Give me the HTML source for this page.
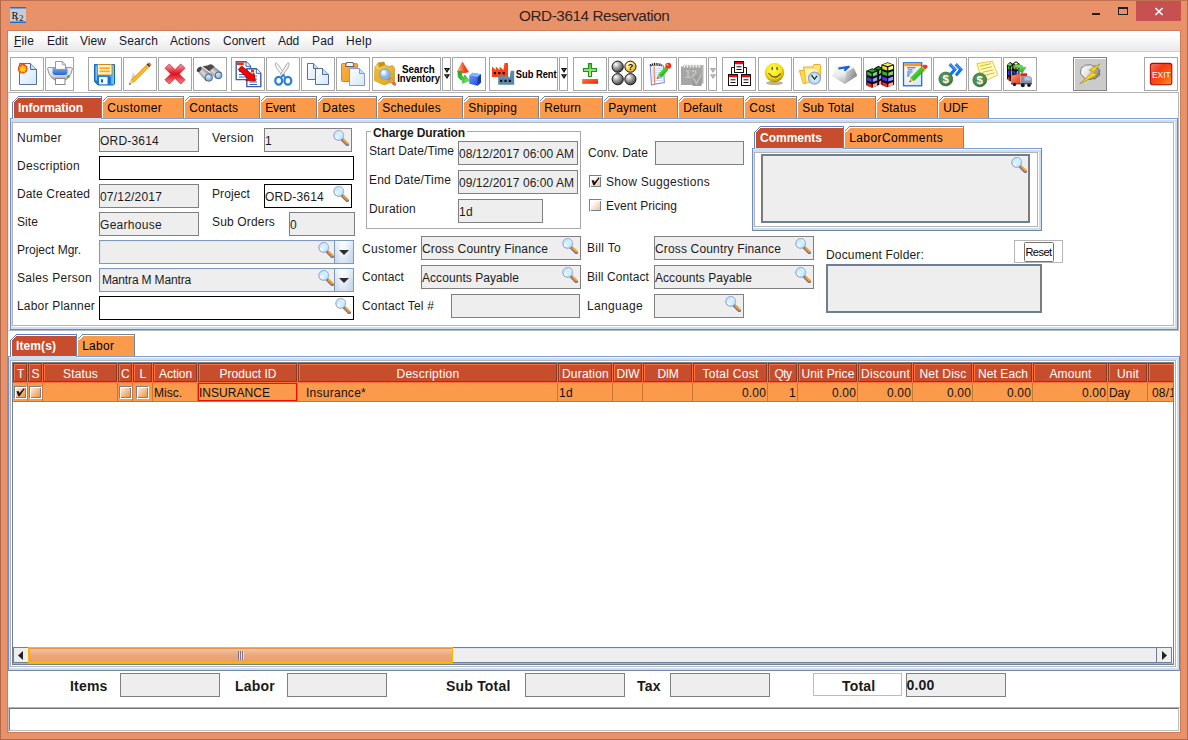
<!DOCTYPE html><html><head><meta charset="utf-8"><title>ORD-3614 Reservation</title><style>
*{box-sizing:border-box;margin:0;padding:0}
html,body{width:1188px;height:740px;overflow:hidden;background:#E9926A;font-family:"Liberation Sans",sans-serif;font-size:12px;color:#000}
.a{position:absolute}
.t{position:absolute;white-space:nowrap;line-height:14px;height:14px;font-size:12px;color:#1c1c1c}
.b{font-weight:bold}
.f{position:absolute;background:#EEEEEE;border:1px solid #808080;height:24px}
.f span{position:absolute;left:0px;top:5px;line-height:14px;white-space:nowrap;color:#1c1c1c}
.fw{background:#fff;border:1px solid #000}
.fb{border-color:#8aa4c8}
.tb{position:absolute;top:57px;width:34px;height:34px;border:1px solid #a5a5a5;background:#fff}
.tb svg{position:absolute;left:0;top:0}
.dd{position:absolute;top:57px;width:9px;height:34px;border:1px solid #a5a5a5;background:#fff}
.hc{position:absolute;top:0;height:19px;padding-left:1px;border:1px solid #8C3A22;background:#C74E2D;box-shadow:inset 1px 1px 0 #FF6E3C;color:#fff;text-align:center;line-height:20px;font-size:12px;white-space:nowrap;overflow:hidden}
.rc{position:absolute;top:20px;height:19px;border-right:1px solid #C8782E;border-bottom:1px solid #C8782E;background:#FB9A4B;line-height:20px;white-space:nowrap;overflow:hidden;color:#111}
.cb{position:absolute;width:13px;height:13px;border:1px solid;border-color:#6f8296 #fff #fff #6f8296;background:linear-gradient(135deg,#ffffff 22%,#f6bc8e 95%);box-shadow:inset 1px 1px 0 #fff,inset -1px -1px 0 #6f8296}
.cbt{background:linear-gradient(135deg,#fde4cf 15%,#f08c38 95%)}
.mg{position:absolute;width:16px;height:16px}
</style></head><body>
<svg width="0" height="0" style="position:absolute"><defs>
<radialGradient id="lens" cx="0.42" cy="0.55" r="0.65"><stop offset="0" stop-color="#e4f6ff"/><stop offset="0.6" stop-color="#c0e8ff"/><stop offset="1" stop-color="#9fd4fa"/></radialGradient>
<linearGradient id="hdl" x1="0" y1="1" x2="1" y2="0"><stop offset="0.3" stop-color="#e8862a"/><stop offset="0.7" stop-color="#ffae3c"/></linearGradient>
<g id="mag"><path d="M9.3 9.6 L14.3 14.6" stroke="#6f7390" stroke-width="3.4" stroke-linecap="round"/><path d="M10 9.3 L15 14.2" stroke="url(#hdl)" stroke-width="2.5" stroke-linecap="butt"/><circle cx="5.5" cy="5.6" r="5.1" fill="#5d6678" opacity="0.55"/><circle cx="5.8" cy="5.3" r="4.9" fill="url(#lens)" stroke="#a3abd2" stroke-width="0.9"/><path d="M2.6 6.6 A3.4 3.4 0 0 0 4.6 8.6" stroke="#fff" stroke-width="1.3" fill="none" stroke-linecap="round"/><path d="M6.5 1.9 A3.6 3.6 0 0 1 9.2 4.4" stroke="#fff" stroke-width="0.9" fill="none" stroke-linecap="round" opacity="0.9"/></g>
</defs></svg>
<div class="a" style="left:0;top:0;width:1188px;height:740px;border:1px solid #B1694A;border-top-color:#C0714E"></div>
<div class="a" style="left:7px;top:30px;width:1174px;height:703px;background:#CC7D58"></div>
<div class="a" style="left:8px;top:31px;width:1172px;height:701px;background:#fff"></div>
<div class="a" style="left:10px;top:7px;width:16px;height:16px;background:#c9ccd3;border-top:1px solid #1e70c8;border-bottom:1px solid #1e70c8;box-shadow:inset 0 1px 0 #6fa0d8,inset 0 -1px 0 #6fa0d8;overflow:hidden"><span style="position:absolute;left:1.5px;top:1px;font-family:'Liberation Serif',serif;font-size:10.5px;line-height:13px;color:#111;letter-spacing:0px">R<span style="font-size:9px;position:relative;top:1.5px;left:0.5px">2</span></span><div class="a" style="left:6px;top:10px;width:1px;height:3px;background:#222;transform:rotate(-35deg)"></div></div>
<div class="a" id="ttl" style="left:519px;top:6px;width:150px;text-align:left;font-size:15.3px;line-height:20px;color:#33231c;white-space:nowrap;letter-spacing:-0.43px">ORD-3614 Reservation</div>
<div class="a" style="left:1092px;top:13px;width:8px;height:2px;background:#1a1f28"></div>
<div class="a" style="left:1118px;top:7px;width:10px;height:8px;border:1px solid #1a1f28;border-top-width:2px"></div>
<div class="a" style="left:1136px;top:1px;width:45px;height:20px;background:#C75050"></div>
<svg class="a" style="left:1154px;top:7px" width="10" height="9" viewBox="0 0 10 9"><path d="M1.4 1 L8.6 8 M8.6 1 L1.4 8" stroke="#fff" stroke-width="1.7" fill="none"/></svg>
<div class="a" style="left:8px;top:31px;width:1172px;height:20px;background:linear-gradient(#ffffff 0%,#fbfbfb 35%,#e9e9e9 100%)"></div>
<div class="a" style="left:8px;top:51px;width:1172px;height:1px;background:#cfcfcf"></div>
<div class="t" style="left:14px;top:34px;color:#161630;letter-spacing:0.166px;">File</div>
<div class="t" style="left:47px;top:34px;color:#161630;letter-spacing:0.08px;">Edit</div>
<div class="t" style="left:80px;top:34px;color:#161630;letter-spacing:0.052px;">View</div>
<div class="t" style="left:119px;top:34px;color:#161630;letter-spacing:0.163px;">Search</div>
<div class="t" style="left:170px;top:34px;color:#161630;letter-spacing:0.093px;">Actions</div>
<div class="t" style="left:223px;top:34px;color:#161630;letter-spacing:-0.002px;">Convert</div>
<div class="t" style="left:278px;top:34px;color:#161630;letter-spacing:-0.117px;">Add</div>
<div class="t" style="left:312px;top:34px;color:#161630;letter-spacing:0.216px;">Pad</div>
<div class="t" style="left:346px;top:34px;color:#161630;letter-spacing:0.33px;">Help</div>
<div class="a" style="left:14px;top:46px;width:7px;height:1px;background:#161630"></div>
<svg width="0" height="0" style="position:absolute"><defs>
<linearGradient id="gDoc" x1="0" y1="0" x2="1" y2="1"><stop offset="0" stop-color="#ffffff"/><stop offset="1" stop-color="#d3e6f7"/></linearGradient>
<radialGradient id="gSun"><stop offset="0" stop-color="#ffd800"/><stop offset="0.45" stop-color="#ffc000"/><stop offset="0.6" stop-color="#f65a20"/><stop offset="0.85" stop-color="#f04828"/><stop offset="1" stop-color="#f04828" stop-opacity="0"/></radialGradient>
<linearGradient id="gPrn" x1="0" y1="0" x2="0" y2="1"><stop offset="0" stop-color="#f6f6f6"/><stop offset="0.5" stop-color="#e0e0e0"/><stop offset="0.8" stop-color="#a8a8a8"/><stop offset="1" stop-color="#6c6c6c"/></linearGradient>
<linearGradient id="gPrnB" x1="0" y1="0" x2="0" y2="1"><stop offset="0" stop-color="#7fb6ff"/><stop offset="1" stop-color="#1f63e0"/></linearGradient>
<linearGradient id="gFlop" x1="0" y1="0" x2="1" y2="0"><stop offset="0" stop-color="#1a7ad2"/><stop offset="0.7" stop-color="#1f86dc"/><stop offset="1" stop-color="#7fd8ff"/></linearGradient>
<linearGradient id="gX" x1="0" y1="0" x2="0" y2="1"><stop offset="0" stop-color="#f7a0a8"/><stop offset="0.5" stop-color="#e0101c"/><stop offset="1" stop-color="#f2868e"/></linearGradient>
<linearGradient id="gBin" x1="0" y1="0" x2="1" y2="1"><stop offset="0" stop-color="#5a5a5a"/><stop offset="0.5" stop-color="#d8d8d8"/><stop offset="1" stop-color="#6a6a6a"/></linearGradient>
<linearGradient id="gBar" x1="0" y1="1" x2="1" y2="0"><stop offset="0.12" stop-color="#3e3e3e"/><stop offset="0.48" stop-color="#dcdcdc"/><stop offset="0.9" stop-color="#3a3a3a"/></linearGradient>
<radialGradient id="gLens2" cx="0.4" cy="0.35"><stop offset="0" stop-color="#d8ecff"/><stop offset="1" stop-color="#7fb4f0"/></radialGradient>
<linearGradient id="gClip" x1="0" y1="0" x2="1" y2="1"><stop offset="0" stop-color="#f8b24c"/><stop offset="1" stop-color="#f09a20"/></linearGradient>
<linearGradient id="gBox" x1="0" y1="0" x2="1" y2="1"><stop offset="0" stop-color="#f8d868"/><stop offset="1" stop-color="#d89c10"/></linearGradient>
<linearGradient id="gCone" x1="0" y1="0" x2="1" y2="0"><stop offset="0" stop-color="#ffc8a0"/><stop offset="0.6" stop-color="#f44a20"/><stop offset="1" stop-color="#e83010"/></linearGradient>
<linearGradient id="gCube" x1="0" y1="0" x2="1" y2="1"><stop offset="0" stop-color="#6aa6ff"/><stop offset="1" stop-color="#1a3fd0"/></linearGradient>
<linearGradient id="gGrn" x1="0" y1="0" x2="0" y2="1"><stop offset="0" stop-color="#8ee07a"/><stop offset="1" stop-color="#1eaa1e"/></linearGradient>
<linearGradient id="gGrn2" x1="0" y1="0" x2="1" y2="1"><stop offset="0" stop-color="#18a018"/><stop offset="0.6" stop-color="#48d038"/><stop offset="1" stop-color="#98f878"/></linearGradient>
<linearGradient id="gPlus" x1="0" y1="0" x2="0" y2="1"><stop offset="0" stop-color="#58b848"/><stop offset="1" stop-color="#e8f8b0"/></linearGradient>
<linearGradient id="gMinus" x1="0" y1="0" x2="1" y2="1"><stop offset="0" stop-color="#ff7848"/><stop offset="1" stop-color="#f02000"/></linearGradient>
<radialGradient id="gBall" cx="0.35" cy="0.3" r="0.8"><stop offset="0" stop-color="#ffffff"/><stop offset="0.45" stop-color="#9c9c9c"/><stop offset="1" stop-color="#2e2e2e"/></radialGradient>
<radialGradient id="gBallY" cx="0.35" cy="0.3" r="0.8"><stop offset="0" stop-color="#ffffff"/><stop offset="0.5" stop-color="#ffd850"/><stop offset="1" stop-color="#e0a000"/></radialGradient>
<radialGradient id="gSmile" cx="0.45" cy="0.35" r="0.65"><stop offset="0" stop-color="#ffff50"/><stop offset="0.6" stop-color="#f6e21c"/><stop offset="0.9" stop-color="#c8a800"/><stop offset="1" stop-color="#8a7000"/></radialGradient>
<linearGradient id="gFold" x1="0" y1="0" x2="1" y2="1"><stop offset="0" stop-color="#fff8c0"/><stop offset="1" stop-color="#ffd030"/></linearGradient>
<radialGradient id="gClock"><stop offset="0" stop-color="#f0faff"/><stop offset="1" stop-color="#a8d4f8"/></radialGradient>
<linearGradient id="gKey" x1="0" y1="0" x2="1" y2="1"><stop offset="0" stop-color="#ffffff"/><stop offset="0.6" stop-color="#e8e8e8"/><stop offset="1" stop-color="#8c8c8c"/></linearGradient>
<linearGradient id="gKeyL" x1="0.2" y1="0" x2="0.5" y2="1"><stop offset="0" stop-color="#ffffff"/><stop offset="0.55" stop-color="#e9e9e9"/><stop offset="1" stop-color="#b4b4b4"/></linearGradient>
<linearGradient id="gKeyR" x1="0" y1="0" x2="1" y2="0.6"><stop offset="0" stop-color="#e4e4e4"/><stop offset="1" stop-color="#7e7e7e"/></linearGradient>
<radialGradient id="gCoin" cx="0.45" cy="0.4" r="0.6"><stop offset="0" stop-color="#5a9a5a"/><stop offset="0.75" stop-color="#4a8a4c"/><stop offset="1" stop-color="#2f6a34"/></radialGradient>
<linearGradient id="gNote" x1="0" y1="0" x2="1" y2="1"><stop offset="0" stop-color="#ffff88"/><stop offset="1" stop-color="#fffff0"/></linearGradient>
<linearGradient id="gExit" x1="0" y1="0" x2="1" y2="1"><stop offset="0" stop-color="#f07868"/><stop offset="0.35" stop-color="#f43c14"/><stop offset="0.7" stop-color="#ff5a10"/><stop offset="1" stop-color="#ffa030"/></linearGradient>
<linearGradient id="gCloud" x1="0" y1="0" x2="1" y2="0.4"><stop offset="0" stop-color="#ffffff"/><stop offset="0.5" stop-color="#e6e6e6"/><stop offset="1" stop-color="#8c8c8c"/></linearGradient>
<linearGradient id="gTruck" x1="0" y1="0" x2="1" y2="1"><stop offset="0" stop-color="#ff9a78"/><stop offset="1" stop-color="#e83818"/></linearGradient>
<linearGradient id="gPen" x1="0" y1="0" x2="1" y2="1"><stop offset="0" stop-color="#a8f088"/><stop offset="0.5" stop-color="#38c81c"/><stop offset="1" stop-color="#208810"/></linearGradient>
</defs></svg>
<svg class="a" style="left:10px;top:57px" width="34" height="34" viewBox="0 0 34 34"><rect x="0.5" y="0.5" width="33" height="33" fill="#fff" stroke="#a7a7a7" shape-rendering="crispEdges"/><path d="M9.5 6.5 H20.5 L26.5 12.5 V27.5 H9.5 Z" fill="url(#gDoc)" stroke="#43618f" stroke-width="0.9"/><path d="M20.5 6.5 V12.5 H26.5" fill="#bfe0f8" stroke="#43618f" stroke-width="0.9"/><circle cx="12.7" cy="11.7" r="5.3" fill="url(#gSun)"/><path d="M12.7 7.6 L13.6 10 L16 9.2 L14.8 11.4 L16.9 12.7 L14.6 13.3 L15 15.7 L13 14.3 L11.6 16.2 L11.2 13.8 L8.8 13.9 L10.5 12.2 L9 10.3 L11.4 10.4 Z" fill="#ffd400"/></svg>
<svg class="a" style="left:88px;top:57px" width="34" height="34" viewBox="0 0 34 34"><rect x="0.5" y="0.5" width="33" height="33" fill="#fff" stroke="#a7a7a7" shape-rendering="crispEdges"/><path d="M6.5 7.5 H26.5 V27 L25.5 28 H10 L6.5 24.5 Z" fill="url(#gFlop)" stroke="#1468b8"/><rect x="7.6" y="8.5" width="1.2" height="15" fill="#9fdcff" opacity="0.9"/><rect x="9.5" y="7.5" width="14.5" height="10.5" fill="#fff4c8" stroke="#c88a28"/><rect x="11.5" y="10.3" width="10.5" height="1.7" fill="#ffa820"/><rect x="11.5" y="13.5" width="10.5" height="1.7" fill="#ffa820"/><rect x="11" y="20" width="8.5" height="7.3" fill="#f4f8ff"/><rect x="13" y="22.3" width="2" height="3.2" fill="#1060d0"/><rect x="20" y="20" width="2.6" height="7.3" fill="#1470cc"/></svg>
<svg class="a" style="left:123px;top:57px" width="34" height="34" viewBox="0 0 34 34"><rect x="0.5" y="0.5" width="33" height="33" fill="#fff" stroke="#a7a7a7" shape-rendering="crispEdges"/><path d="M6 28 L10.2 15.5 L12.6 19.2 Z" fill="#b0b0b0" opacity="0.6"/><path d="M6 27.9 L8 23 L10.7 25.7 Z" fill="#f0c8a0"/><path d="M6 27.9 L6.8 25.9 L8 27.1 Z" fill="#2a2a2a"/><path d="M8 23 L23.6 7.4 L26.3 10.1 L10.7 25.7 Z" fill="#f5a000"/><path d="M9 24 L24.6 8.4 L25.4 9.2 L9.8 24.8 Z" fill="#ffcf40"/><path d="M23.6 7.4 L24.7 6.3 L27.4 9 L26.3 10.1 Z" fill="#2a2a2a"/><path d="M24.7 6.3 L25.6 5.4 Q27.8 5.2 28.3 8.1 L27.4 9 Z" fill="#ff5a20"/></svg>
<svg class="a" style="left:158px;top:57px" width="34" height="34" viewBox="0 0 34 34"><rect x="0.5" y="0.5" width="33" height="33" fill="#fff" stroke="#a7a7a7" shape-rendering="crispEdges"/><path d="M11.3 7 L17 12.7 L22.7 7 L27 11.3 L21.3 17 L27 22.7 L22.7 27 L17 21.3 L11.3 27 L7 22.7 L12.7 17 L7 11.3 Z" fill="url(#gX)" stroke="#c8202c" stroke-width="0.8"/></svg>
<svg class="a" style="left:193px;top:57px" width="34" height="34" viewBox="0 0 34 34"><rect x="0.5" y="0.5" width="33" height="33" fill="#fff" stroke="#a7a7a7" shape-rendering="crispEdges"/><path d="M4.3 14.2 Q4.2 10.2 8.2 9.6 L19.4 18 L13 24.6 Z" fill="url(#gBar)"/><path d="M13.2 10.8 Q14 7.2 18.6 7.6 L29 15.8 L23 21.9 Z" fill="url(#gBar)"/><path d="M9.5 9.3 L14.5 8.4 Q16.5 7 18.8 7.6 L21.5 9.8 L16.2 14.2 Z" fill="#4a4a4a"/><ellipse cx="6.2" cy="12.4" rx="1.9" ry="2.9" transform="rotate(38 6.2 12.4)" fill="#454545"/><circle cx="15.8" cy="20.6" r="3.7" fill="url(#gLens2)" stroke="#5e666e" stroke-width="1"/><circle cx="25.5" cy="18.4" r="3.4" fill="url(#gLens2)" stroke="#5e666e" stroke-width="1"/></svg>
<svg class="a" style="left:231px;top:57px" width="34" height="34" viewBox="0 0 34 34"><rect x="0.5" y="0.5" width="33" height="33" fill="#fff" stroke="#a7a7a7" shape-rendering="crispEdges"/><path d="M5.2 4.8 H15 L19.5 9.3 V22.6 H5.2 Z" fill="#fff" stroke="#3c5fa8" stroke-width="1.4"/><path d="M15 4.8 V9.3 H19.5" fill="#fff" stroke="#3c5fa8"/><rect x="6" y="5.5" width="6.8" height="2.5" fill="#ff2a00"/><rect x="8" y="14" width="8" height="1" fill="#3c64b4"/><rect x="8" y="17" width="8" height="1" fill="#3c64b4"/><rect x="8" y="19.5" width="8" height="1" fill="#3c64b4"/><path d="M15.8 11.8 H25.3 L29.8 16.3 V29.6 H15.8 Z" fill="#fff" stroke="#3c5fa8" stroke-width="1.4"/><path d="M25.3 11.8 V16.3 H29.8" fill="#fff" stroke="#3c5fa8"/><rect x="20" y="12.5" width="3" height="3" fill="#ff2a00"/><rect x="18.5" y="24.5" width="7.5" height="1" fill="#3c64b4"/><rect x="18.5" y="27" width="7.5" height="1" fill="#3c64b4"/><rect x="22.5" y="18.5" width="3.5" height="1" fill="#3c64b4"/><rect x="22.5" y="21.5" width="3.5" height="1" fill="#3c64b4"/><path d="M7.2 12.5 L10.6 9 L21.5 17.6 L23 16 L24.4 24 L15 23.6 L17 21.6 Z" fill="#ff0000" stroke="#400" stroke-width="0.6"/></svg>
<svg class="a" style="left:266px;top:57px" width="34" height="34" viewBox="0 0 34 34"><rect x="0.5" y="0.5" width="33" height="33" fill="#fff" stroke="#a7a7a7" shape-rendering="crispEdges"/><path d="M9.6 6 Q8.8 8 10.5 11 L17.2 19.5 L18.6 17.2 L11.6 7 Q10.4 5.4 9.6 6 Z" fill="#fafafa" stroke="#9a9a9a" stroke-width="0.8"/><path d="M22.8 6 Q23.6 8 21.9 11 L15.8 19.5 L14.6 17.2 L20.8 7 Q22 5.4 22.8 6 Z" fill="#f2f2f2" stroke="#9a9a9a" stroke-width="0.8"/><ellipse cx="12.7" cy="23.7" rx="3.4" ry="3.9" fill="none" stroke="#2a7fdc" stroke-width="2.3"/><ellipse cx="21.9" cy="23.7" rx="3.4" ry="3.9" fill="none" stroke="#2a7fdc" stroke-width="2.3"/><path d="M15 20.5 L17.2 18 L19.4 20.5" fill="none" stroke="#2a7fdc" stroke-width="1.6"/></svg>
<svg class="a" style="left:301px;top:57px" width="34" height="34" viewBox="0 0 34 34"><rect x="0.5" y="0.5" width="33" height="33" fill="#fff" stroke="#a7a7a7" shape-rendering="crispEdges"/><path d="M6.5 6.5 H12.5 L17.5 11.5 V22.5 H6.5 Z" fill="url(#gDoc)" stroke="#45638f" stroke-width="0.9"/><path d="M12.5 6.5 V11.5 H17.5" fill="#bfe0f8" stroke="#45638f" stroke-width="0.9"/><path d="M14.5 11.5 H21.5 L27.5 17.5 V27.5 H14.5 Z" fill="url(#gDoc)" stroke="#45638f" stroke-width="0.9"/><path d="M21.5 11.5 V17.5 H27.5" fill="#bfe0f8" stroke="#45638f" stroke-width="0.9"/></svg>
<svg class="a" style="left:336px;top:57px" width="34" height="34" viewBox="0 0 34 34"><rect x="0.5" y="0.5" width="33" height="33" fill="#fff" stroke="#a7a7a7" shape-rendering="crispEdges"/><rect x="5.5" y="6.5" width="16" height="18" rx="1" fill="url(#gClip)" stroke="#d08a28"/><path d="M9.5 9.5 L10.5 5.5 H17 L18 9.5 Z" fill="#f4f4f4" stroke="#555" stroke-width="0.9"/><path d="M13.5 11.5 H23.5 L28.5 16.5 V28.5 H13.5 Z" fill="url(#gDoc)" stroke="#8a96e0" stroke-width="1"/><path d="M23.5 11.5 V16.5 H28.5" fill="#bfe0f8" stroke="#8a96e0" stroke-width="1"/></svg>
<svg class="a" style="left:452px;top:57px" width="34" height="34" viewBox="0 0 34 34"><rect x="0.5" y="0.5" width="33" height="33" fill="#fff" stroke="#a7a7a7" shape-rendering="crispEdges"/><path d="M10.5 5 L16.6 15 Q11 17 5.2 15 Z" fill="url(#gCone)" stroke="#e04020" stroke-width="0.5"/><path d="M6.3 14.2 Q4.6 22.2 10.9 23.6 L10.4 26.3 L17.2 23.6 L12.8 18 L12.1 20.4 Q8.8 19.8 10 14.6 Z" fill="url(#gGrn2)" stroke="#22a022" stroke-width="0.6"/><path d="M17.2 18.5 L20.5 15.8 L29 17.2 L29 25.5 L25.5 28.8 L17.2 26.8 Z" fill="url(#gCube)"/><path d="M17.2 18.5 L20.5 15.8 L29 17.2 L25.8 20 Z" fill="#86b4ff"/><path d="M25.8 20 L29 17.2 V25.5 L25.5 28.8 Z" fill="#1a36b8"/></svg>
<svg class="a" style="left:573px;top:57px" width="34" height="34" viewBox="0 0 34 34"><rect x="0.5" y="0.5" width="33" height="33" fill="#fff" stroke="#a7a7a7" shape-rendering="crispEdges"/><path d="M15.5 6.5 H18.5 V11.5 H23.5 V14.5 H18.5 V19.5 H15.5 V14.5 H10.5 V11.5 H15.5 Z" fill="url(#gPlus)" stroke="#1a961a" stroke-width="1.2"/><rect x="9.2" y="22" width="15.8" height="4.8" fill="url(#gMinus)"/></svg>
<svg class="a" style="left:608px;top:57px" width="34" height="34" viewBox="0 0 34 34"><rect x="0.5" y="0.5" width="33" height="33" fill="#fff" stroke="#a7a7a7" shape-rendering="crispEdges"/><circle cx="9.7" cy="9.7" r="5.6" fill="url(#gBall)" stroke="#151515" stroke-width="1"/><circle cx="22.4" cy="9.7" r="5.6" fill="url(#gBallY)" stroke="#151515" stroke-width="1"/><circle cx="9.7" cy="22.2" r="5.6" fill="url(#gBall)" stroke="#151515" stroke-width="1"/><circle cx="22.4" cy="22.2" r="5.6" fill="url(#gBall)" stroke="#151515" stroke-width="1"/><text x="22.4" y="13" text-anchor="middle" font-family="Liberation Sans,sans-serif" font-weight="bold" font-size="9" fill="#111">?</text></svg>
<svg class="a" style="left:643px;top:57px" width="34" height="34" viewBox="0 0 34 34"><rect x="0.5" y="0.5" width="33" height="33" fill="#fff" stroke="#a7a7a7" shape-rendering="crispEdges"/><path d="M7.2 8 L20.5 9 L21.3 25.5 L8.5 27.8 Z" fill="#fff" stroke="#8a8ad4" stroke-width="1.1"/><path d="M9 12 L20 11.2" stroke="#a8c8f8" stroke-width="0.7"/><path d="M9 14 L20 13.2" stroke="#a8c8f8" stroke-width="0.7"/><path d="M9 16 L20 15.2" stroke="#a8c8f8" stroke-width="0.7"/><path d="M9 18 L20 17.2" stroke="#a8c8f8" stroke-width="0.7"/><path d="M9 20 L20 19.2" stroke="#a8c8f8" stroke-width="0.7"/><path d="M9 22 L20 21.2" stroke="#a8c8f8" stroke-width="0.7"/><path d="M9 24 L20 23.2" stroke="#a8c8f8" stroke-width="0.7"/><path d="M11 9 L11.6 27" stroke="#ff7a40" stroke-width="1"/><path d="M7.5 8.6 Q11 5.5 19 8.2" fill="none" stroke="#111" stroke-width="2.2" stroke-dasharray="1 0.9"/><path d="M13.9 21.8 L15.2 17.6 L18.6 20.6 Z" fill="#c8a070"/><path d="M13.9 21.8 L14.4 20.2 L15.7 21.3 Z" fill="#333"/><path d="M15.2 17.6 L22.2 9.6 L25.6 12.6 L18.6 20.6 Z" fill="url(#gPen)"/><path d="M22.2 9.6 L22.9 8.8 L26.3 11.8 L25.6 12.6 Z" fill="#e8e8e8"/><circle cx="25.3" cy="8.8" r="3" fill="#e83418"/><circle cx="24.4" cy="7.9" r="1.1" fill="#ff8a70"/></svg>
<svg class="a" style="left:722px;top:57px" width="34" height="34" viewBox="0 0 34 34"><rect x="0.5" y="0.5" width="33" height="33" fill="#fff" stroke="#a7a7a7" shape-rendering="crispEdges"/><path d="M9.5 17.5 V10.5 H12.5 M21.5 10.5 H24.5 V17.5" fill="none" stroke="#1a1010"/><rect x="12.5" y="4.5" width="9" height="11" fill="#fff" stroke="#1a1010"/><rect x="13" y="5" width="8" height="2.2" fill="#ff0000"/><rect x="14.5" y="9.3" width="5" height="1" fill="#1a1010"/><rect x="14.5" y="12" width="5" height="1" fill="#1a1010"/><rect x="6.5" y="17.5" width="9" height="11" fill="#fff" stroke="#1a1010"/><rect x="7" y="18" width="8" height="2.2" fill="#ff0000"/><rect x="8.5" y="22.3" width="5" height="1" fill="#1a1010"/><rect x="8.5" y="25" width="5" height="1" fill="#1a1010"/><rect x="19.5" y="17.5" width="9" height="11" fill="#fff" stroke="#1a1010"/><rect x="20" y="18" width="8" height="2.2" fill="#ff0000"/><rect x="21.5" y="22.3" width="5" height="1" fill="#1a1010"/><rect x="21.5" y="25" width="5" height="1" fill="#1a1010"/></svg>
<svg class="a" style="left:758px;top:57px" width="34" height="34" viewBox="0 0 34 34"><rect x="0.5" y="0.5" width="33" height="33" fill="#fff" stroke="#a7a7a7" shape-rendering="crispEdges"/><ellipse cx="16.5" cy="26" rx="8.5" ry="2" fill="#6a5800" opacity="0.45"/><circle cx="16.5" cy="15.5" r="9.7" fill="url(#gSmile)"/><ellipse cx="14.2" cy="11.6" rx="0.7" ry="1.8" fill="#3a4a20"/><ellipse cx="19.1" cy="11.6" rx="0.7" ry="1.8" fill="#3a4a20"/><path d="M10.8 16.5 Q16.5 23.5 22.4 16.8" fill="none" stroke="#4a3a10" stroke-width="1.1" stroke-linecap="round"/></svg>
<svg class="a" style="left:793px;top:57px" width="34" height="34" viewBox="0 0 34 34"><rect x="0.5" y="0.5" width="33" height="33" fill="#fff" stroke="#a7a7a7" shape-rendering="crispEdges"/><path d="M6.5 13.5 H11 L10.5 10 H20 L21 7.5 H27 L27.6 9 V22 L11 26.5 Z" fill="url(#gFold)" stroke="#e8a418" stroke-width="0.9"/><path d="M11.5 11 L12 26 L25 22.5 V14 L23 11.5 Z" fill="#fff6b0" stroke="#f0c040" stroke-width="0.5"/><path d="M6.5 13.5 L10 26.5 L13 25.8 L11.5 13.5 Z" fill="#ffd84a" stroke="#e8a418" stroke-width="0.6"/><circle cx="21.5" cy="21.2" r="6" fill="url(#gClock)" stroke="#96a8c8" stroke-width="1.2"/><path d="M18.5 18.2 L21.5 22.2 L24 18.8" fill="none" stroke="#222" stroke-width="1.2"/></svg>
<svg class="a" style="left:828px;top:57px" width="34" height="34" viewBox="0 0 34 34"><rect x="0.5" y="0.5" width="33" height="33" fill="#fff" stroke="#a7a7a7" shape-rendering="crispEdges"/><path d="M4 18.6 L8.2 10.6 Q8.6 10 9.4 9.7 L14.6 7.4 Q15.2 7.2 16 7.4 L25.2 10.2 Q26 10.5 26.3 11.2 L29 18 Q29.2 18.8 28.4 19.3 L17.4 26.6 Q16.7 27 16 26.6 L4.4 19.6 Q3.8 19.2 4 18.6 Z" fill="url(#gKeyL)"/><path d="M18.2 14.8 L25.6 10.8 L29 18 Q29.2 18.8 28.4 19.3 L17.4 26.6 Q16.9 26.9 16.7 26.8 Z" fill="url(#gKeyR)"/><path d="M8.8 10.9 L15 7.9 L25.2 10.8 L18.2 14.6 Z" fill="#fdfdfd" stroke="#e4e4e4" stroke-width="0.4"/><path d="M20.9 9.7 L11.2 11.4 M20.9 9.7 L17 13.1" stroke="#1a66e0" stroke-width="2.1" stroke-linecap="round" fill="none"/><path d="M15.2 10.6 L17.6 12.2" stroke="#1a66e0" stroke-width="1.2"/></svg>
<svg class="a" style="left:863px;top:57px" width="34" height="34" viewBox="0 0 34 34"><rect x="0.5" y="0.5" width="33" height="33" fill="#fff" stroke="#a7a7a7" shape-rendering="crispEdges"/><path d="M11.2 11.3 L15.45 8.8 L19.7 11.3 V25.8 L15.45 28.3 L11.2 25.8 Z" fill="#0a0a0a"/><path d="M12.2 12.0 L14.85 13.8 V17.2 L12.2 15.6 Z" fill="#3caa3c"/><path d="M18.7 12.0 L16.05 13.8 V17.2 L18.7 15.6 Z" fill="#7ad07a"/><path d="M12.2 17.5 L14.85 19.3 V22.7 L12.2 21.1 Z" fill="#3a3af0"/><path d="M18.7 17.5 L16.05 19.3 V22.7 L18.7 21.1 Z" fill="#9a9aff"/><path d="M12.2 23.0 L14.85 24.8 V28.2 L12.2 26.6 Z" fill="#f02828"/><path d="M18.7 23.0 L16.05 24.8 V28.2 L18.7 26.6 Z" fill="#ffa0a0"/><path d="M12.7 11.200000000000001 L15.45 9.700000000000001 L18.2 11.200000000000001 L15.45 12.8 Z" fill="#168a16"/><path d="M3.2 13.7 L9.2 11.2 L15.2 13.7 V28.2 L9.2 30.7 L3.2 28.2 Z" fill="#0a0a0a"/><path d="M4.2 14.399999999999999 L8.6 16.2 V19.599999999999998 L4.2 18.0 Z" fill="#3caa3c"/><path d="M14.2 14.399999999999999 L9.799999999999999 16.2 V19.599999999999998 L14.2 18.0 Z" fill="#7ad07a"/><path d="M4.2 19.9 L8.6 21.7 V25.099999999999998 L4.2 23.5 Z" fill="#3a3af0"/><path d="M14.2 19.9 L9.799999999999999 21.7 V25.099999999999998 L14.2 23.5 Z" fill="#9a9aff"/><path d="M4.2 25.4 L8.6 27.2 V30.599999999999998 L4.2 29.0 Z" fill="#f02828"/><path d="M14.2 25.4 L9.799999999999999 27.2 V30.599999999999998 L14.2 29.0 Z" fill="#ffa0a0"/><path d="M4.7 13.6 L9.2 12.1 L13.7 13.6 L9.2 15.2 Z" fill="#1f9a1f"/><path d="M18.3 7.7 L24.700000000000003 5.2 L31.1 7.7 V27.7 L24.700000000000003 30.2 L18.3 27.7 Z" fill="#0a0a0a"/><path d="M19.3 8.4 L24.1 10.200000000000001 V13.600000000000001 L19.3 12.0 Z" fill="#f0e020"/><path d="M30.1 8.4 L25.300000000000004 10.200000000000001 V13.600000000000001 L30.1 12.0 Z" fill="#ffff90"/><path d="M19.3 13.9 L24.1 15.700000000000001 V19.1 L19.3 17.5 Z" fill="#3caa3c"/><path d="M30.1 13.9 L25.300000000000004 15.700000000000001 V19.1 L30.1 17.5 Z" fill="#7ad07a"/><path d="M19.3 19.4 L24.1 21.2 V24.599999999999998 L19.3 23.0 Z" fill="#3a3af0"/><path d="M30.1 19.4 L25.300000000000004 21.2 V24.599999999999998 L30.1 23.0 Z" fill="#9a9aff"/><path d="M19.3 24.9 L24.1 26.7 V30.099999999999998 L19.3 28.5 Z" fill="#f02828"/><path d="M30.1 24.9 L25.300000000000004 26.7 V30.099999999999998 L30.1 28.5 Z" fill="#ffa0a0"/><path d="M19.8 7.6 L24.700000000000003 6.1000000000000005 L29.6 7.6 L24.700000000000003 9.2 Z" fill="#f4f060"/></svg>
<svg class="a" style="left:898px;top:57px" width="34" height="34" viewBox="0 0 34 34"><rect x="0.5" y="0.5" width="33" height="33" fill="#fff" stroke="#a7a7a7" shape-rendering="crispEdges"/><rect x="5.5" y="5.8" width="18.2" height="23" fill="url(#gDoc)" stroke="#1f72c4" stroke-width="1.3"/><rect x="6.2" y="6.4" width="16.8" height="2.8" fill="#ff9424"/><rect x="9" y="10.3" width="8.5" height="1" fill="#3c64b4"/><rect x="10" y="12.4" width="4.5" height="1" fill="#3c64b4"/><rect x="9" y="14.5" width="5.5" height="1" fill="#3c64b4"/><rect x="9" y="16.5" width="3.5" height="1" fill="#3c64b4"/><rect x="9" y="18.4" width="2.5" height="1" fill="#3c64b4"/><path d="M11.3 25.2 L12.8 20.6 L16 23.8 Z" fill="#f0c040"/><path d="M11.3 25.2 L11.9 23.4 L13.1 24.6 Z" fill="#222"/><path d="M12.8 20.6 L23.8 9.6 L27 12.8 L16 23.8 Z" fill="url(#gPen)" stroke="#2a8a1a" stroke-width="0.4"/><path d="M23.8 9.6 L25.6 7.8 Q28.5 7.2 29.6 9 Q30 11 28.8 11 L27 12.8 Z" fill="#f03820"/><path d="M23.4 10 L24.2 9.2 L27.4 12.4 L26.6 13.2 Z" fill="#e8b050"/></svg>
<svg class="a" style="left:933px;top:57px" width="34" height="34" viewBox="0 0 34 34"><rect x="0.5" y="0.5" width="33" height="33" fill="#fff" stroke="#a7a7a7" shape-rendering="crispEdges"/><path d="M15.6 8.2 L17.8 6 L24 12.6 L18 19.2 L15.8 17 L19.8 12.6 Z" fill="#1274ea"/><path d="M21.6 8.2 L23.8 6 L30 12.6 L24 19.6 L21.8 17.4 L25.8 12.6 Z" fill="#1274ea"/><path d="M17 7 L22.4 12.6" stroke="#6ab0ff" stroke-width="0.8"/><path d="M23 7 L28.4 12.6" stroke="#6ab0ff" stroke-width="0.8"/><circle cx="12.8" cy="22" r="6.9" fill="url(#gCoin)" stroke="#3a7a3e" stroke-width="0.8"/><text x="12.8" y="26.2" text-anchor="middle" font-family="Liberation Sans,sans-serif" font-weight="bold" font-size="11.5" fill="#fff">$</text></svg>
<svg class="a" style="left:968px;top:57px" width="34" height="34" viewBox="0 0 34 34"><rect x="0.5" y="0.5" width="33" height="33" fill="#fff" stroke="#a7a7a7" shape-rendering="crispEdges"/><path d="M8.9 6.7 L24.3 4.2 L29.8 17.9 L19 23 L13 20 Z" fill="url(#gNote)" stroke="#f4c424" stroke-width="1"/><path d="M12.0 9.2 L23.0 6.6" stroke="#c8a848" stroke-width="0.9"/><path d="M13.2 12.299999999999999 L24.2 9.7" stroke="#c8a848" stroke-width="0.9"/><path d="M14.4 15.399999999999999 L25.4 12.8" stroke="#c8a848" stroke-width="0.9"/><path d="M15.6 18.5 L26.6 15.9" stroke="#c8a848" stroke-width="0.9"/><circle cx="11.8" cy="22.9" r="6.9" fill="url(#gCoin)" stroke="#3a7a3e" stroke-width="0.8"/><text x="11.8" y="27.099999999999998" text-anchor="middle" font-family="Liberation Sans,sans-serif" font-weight="bold" font-size="11.5" fill="#fff">$</text></svg>
<svg class="a" style="left:1003px;top:57px" width="34" height="34" viewBox="0 0 34 34"><rect x="0.5" y="0.5" width="33" height="33" fill="#fff" stroke="#a7a7a7" shape-rendering="crispEdges"/><path d="M4 7.5 L7.25 5 L10.5 7.5 V22.0 L7.25 24.5 L4 22.0 Z" fill="#0a0a0a"/><path d="M5 8.2 L6.65 10.0 V13.399999999999999 L5 11.799999999999999 Z" fill="#3caa3c"/><path d="M9.5 8.2 L7.85 10.0 V13.399999999999999 L9.5 11.799999999999999 Z" fill="#7ad07a"/><path d="M5 13.7 L6.65 13.3 V18.9 L5 17.3 Z" fill="#3a3af0"/><path d="M9.5 13.7 L7.85 13.3 V18.9 L9.5 17.3 Z" fill="#9a9aff"/><path d="M5 19.2 L6.65 21.0 V24.4 L5 22.8 Z" fill="#f02828"/><path d="M9.5 19.2 L7.85 21.0 V24.4 L9.5 22.8 Z" fill="#ffa0a0"/><path d="M3.3 7.4 L7.25 5.9 L9.0 7.4 L7.25 9 Z" fill="#7ad07a"/><path d="M9.5 6.8 L13.0 4.3 L16.5 6.8 V21.3 L13.0 23.8 L9.5 21.3 Z" fill="#0a0a0a"/><path d="M10.5 7.5 L12.4 9.3 V12.7 L10.5 11.1 Z" fill="#f0e020"/><path d="M15.5 7.5 L13.6 9.3 V12.7 L15.5 11.1 Z" fill="#ffff90"/><path d="M10.5 13.0 L12.4 14.8 V18.2 L10.5 16.6 Z" fill="#3a3af0"/><path d="M15.5 13.0 L13.6 14.8 V18.2 L15.5 16.6 Z" fill="#9a9aff"/><path d="M10.5 18.5 L12.4 20.3 V23.7 L10.5 22.1 Z" fill="#f02828"/><path d="M15.5 18.5 L13.6 20.3 V23.7 L15.5 22.1 Z" fill="#ffa0a0"/><path d="M11.0 6.699999999999999 L13.0 5.2 L15.0 6.699999999999999 L13.0 8.3 Z" fill="#ffff90"/><path d="M11 8.5 Q18 5.5 20.5 11 L23 10 L19.2 16 L14.5 12.5 L17 12 Q15.5 9.5 11.5 11 Z" fill="url(#gGrn)" stroke="#189818" stroke-width="0.5"/><path d="M8 18.5 L17.5 16.8 V26.5 H8 Z" fill="url(#gTruck)"/><rect x="17.5" y="16.3" width="6.5" height="3" fill="#f02010"/><path d="M17.8 19.2 H26.5 Q28.8 19.5 28.9 22 V26.8 H17.8 Z" fill="#8890a8"/><path d="M21.5 20 H26.3 Q27.9 20.3 28 22.5 V23.5 H21.5 Z" fill="#a8c8f0"/><rect x="8" y="26" width="21" height="1.4" fill="#555"/><circle cx="11.5" cy="27.5" r="1.7" fill="#222"/><circle cx="19.8" cy="28.2" r="2" fill="#1a1a1a"/><circle cx="26" cy="28.2" r="1.8" fill="#1a1a1a"/></svg>
<svg class="a" style="left:1144px;top:57px" width="34" height="34" viewBox="0 0 34 34"><rect x="0.5" y="0.5" width="33" height="33" fill="#fff" stroke="#a7a7a7" shape-rendering="crispEdges"/><rect x="6.4" y="6.4" width="21.4" height="21.4" rx="2.2" fill="url(#gExit)" stroke="#a40c0c" stroke-width="1.1"/><text x="7.9" y="21.2" font-family="Liberation Sans,sans-serif" font-size="9.6" fill="#fff" textLength="18.8" lengthAdjust="spacingAndGlyphs">EXIT</text></svg>
<svg class="a" style="left:45px;top:57px" width="29" height="34" viewBox="0 0 29 34"><rect x="0.5" y="0.5" width="28" height="33" fill="#fff" stroke="#a7a7a7" shape-rendering="crispEdges"/><path d="M3.6 10.5 H26.4 Q27.6 10.5 27.3 12 Q26 22.5 15 25 Q4 22.5 2.7 12 Q2.4 10.5 3.6 10.5 Z" fill="url(#gPrn)" stroke="#7e7e7e" stroke-width="0.8"/><path d="M7.5 10.6 H22.5 V15 Q22.5 18 19.5 18 H10.5 Q7.5 18 7.5 15 Z" fill="url(#gPrnB)"/><rect x="9.8" y="10.6" width="10.6" height="3" fill="#84848c"/><path d="M10.5 12.4 V4.5 H17.2 L20.5 7.8 V12.4 Z" fill="#fff" stroke="#909090" stroke-width="0.9"/><path d="M17.2 4.5 V7.8 H20.5 Z" fill="#ececec" stroke="#909090" stroke-width="0.7"/><circle cx="23.3" cy="19.5" r="1.2" fill="#18b030"/><rect x="10.5" y="21.5" width="9.5" height="6" fill="#fff" stroke="#8a8a8a"/></svg>
<svg class="a" style="left:372px;top:57px" width="69" height="34" viewBox="0 0 69 34"><rect x="0.5" y="0.5" width="68" height="33" fill="#fff" stroke="#a7a7a7" shape-rendering="crispEdges"/><path d="M3 10 L6 6 L12 5 L13 8 L17 9.5 L20.5 8.5 L22.5 11 V24 L12 28 L2.5 23.5 Z" fill="url(#gBox)" stroke="#c08a10" stroke-width="0.6"/><path d="M6 6 L12 5 L13 8 L7 10.5 Z" fill="#c89010"/><path d="M2.5 11 L12 14.5 V28 L2.5 23.5 Z" fill="#e8b020" opacity="0.7"/><path d="M16.5 21 L22.5 27" stroke="#8a9098" stroke-width="3.6" stroke-linecap="round"/><path d="M17 21.5 L22.3 26.8" stroke="#ff6a20" stroke-width="2.2" stroke-linecap="round"/><path d="M18.2 22.7 L21 25.5" stroke="#ffd870" stroke-width="2.2" stroke-dasharray="1 1"/><circle cx="12.9" cy="17.2" r="5.3" fill="url(#gLens2)" stroke="#98a4b0" stroke-width="1.2"/><circle cx="11.5" cy="15.5" r="2.2" fill="#fff" opacity="0.7"/><text x="46.4" y="15.7" text-anchor="middle" font-family="Liberation Sans,sans-serif" font-weight="bold" font-size="10" fill="#000" textLength="32.6" lengthAdjust="spacingAndGlyphs">Search</text><text x="46.6" y="25.4" text-anchor="middle" font-family="Liberation Sans,sans-serif" font-weight="bold" font-size="10" fill="#000" textLength="42.8" lengthAdjust="spacingAndGlyphs">Inventory</text></svg>
<svg class="a" style="left:442px;top:57px" width="9" height="34" viewBox="0 0 9 34"><rect x="0.5" y="0.5" width="8" height="33" fill="#fff" stroke="#a7a7a7" shape-rendering="crispEdges"/><path d="M1.9 11 H8.1 L5 15.9 Z M1.9 17.2 H8.1 L5 22.1 Z" fill="#111"/><rect x="4.4" y="12.2" width="0.9" height="0.9" fill="#fff" opacity="0.85"/><rect x="4.4" y="18.4" width="0.9" height="0.9" fill="#fff" opacity="0.85"/></svg>
<svg class="a" style="left:489px;top:57px" width="69" height="34" viewBox="0 0 69 34"><rect x="0.5" y="0.5" width="68" height="33" fill="#fff" stroke="#a7a7a7" shape-rendering="crispEdges"/><path d="M3 20 V9.5 L6.8 13 V9.5 L10.6 13 V9.5 L14.4 13 L15.6 6 H19 V20 Z" fill="#ff4210"/><rect x="4.8" y="15" width="2.2" height="2.2" fill="#111"/><rect x="9.2" y="15" width="2.2" height="2.2" fill="#111"/><rect x="13.600000000000001" y="15" width="2.2" height="2.2" fill="#111"/><path d="M9.2 27.8 V17.3 L13.0 20.8 V17.3 L16.799999999999997 20.8 V17.3 L20.6 20.8 L21.799999999999997 13.8 H25.2 V27.8 Z" fill="#5a88a8"/><rect x="11.0" y="22.8" width="2.2" height="2.2" fill="#111"/><rect x="15.4" y="22.8" width="2.2" height="2.2" fill="#111"/><rect x="19.8" y="22.8" width="2.2" height="2.2" fill="#111"/><text x="26.7" y="21.1" font-family="Liberation Sans,sans-serif" font-weight="bold" font-size="10" fill="#000" textLength="41" lengthAdjust="spacingAndGlyphs">Sub Rent</text></svg>
<svg class="a" style="left:559px;top:57px" width="9" height="34" viewBox="0 0 9 34"><rect x="0.5" y="0.5" width="8" height="33" fill="#fff" stroke="#a7a7a7" shape-rendering="crispEdges"/><path d="M1.9 11 H8.1 L5 15.9 Z M1.9 17.2 H8.1 L5 22.1 Z" fill="#111"/><rect x="4.4" y="12.2" width="0.9" height="0.9" fill="#fff" opacity="0.85"/><rect x="4.4" y="18.4" width="0.9" height="0.9" fill="#fff" opacity="0.85"/></svg>
<svg class="a" style="left:678px;top:57px" width="29" height="34" viewBox="0 0 29 34"><rect x="0.5" y="0.5" width="28" height="33" fill="#fff" stroke="#a7a7a7" shape-rendering="crispEdges"/><rect x="5" y="8" width="20.5" height="18.5" fill="#b4b4b4"/><rect x="3" y="9.5" width="20.5" height="18.5" fill="#a6a6a6"/><rect x="5.5" y="6.5" width="1.6" height="4.2" rx="0.8" fill="#ededed"/><rect x="8.5" y="6.5" width="1.6" height="4.2" rx="0.8" fill="#ededed"/><rect x="11.5" y="6.5" width="1.6" height="4.2" rx="0.8" fill="#ededed"/><rect x="14.5" y="6.5" width="1.6" height="4.2" rx="0.8" fill="#ededed"/><rect x="17.5" y="6.5" width="1.6" height="4.2" rx="0.8" fill="#ededed"/><rect x="20.5" y="6.5" width="1.6" height="4.2" rx="0.8" fill="#ededed"/><text x="12.8" y="21" text-anchor="middle" font-family="Liberation Sans,sans-serif" font-weight="bold" font-size="11" fill="#c4c4c4">12</text><path d="M14.5 20 V29 H23.5 V17" fill="#9c9c9c"/><path d="M15.5 21 L18.5 26.5 L23 17.5" fill="none" stroke="#c2c2c2" stroke-width="1.5"/></svg>
<svg class="a" style="left:708px;top:57px" width="9" height="34" viewBox="0 0 9 34"><rect x="0.5" y="0.5" width="8" height="33" fill="#fff" stroke="#a7a7a7" shape-rendering="crispEdges"/><path d="M1.9 11 H8.1 L5 15.9 Z M1.9 17.2 H8.1 L5 22.1 Z" fill="#a8a8a8"/><rect x="4.4" y="12.2" width="0.9" height="0.9" fill="#fff" opacity="0.85"/><rect x="4.4" y="18.4" width="0.9" height="0.9" fill="#fff" opacity="0.85"/></svg>
<svg class="a" style="left:1073px;top:57px" width="34" height="34" viewBox="0 0 34 34"><rect x="0.5" y="0.5" width="33" height="33" fill="#CBCBCB" stroke="#838383" shape-rendering="crispEdges"/><path d="M1.5 32.5 V1.5 H32.5" fill="none" stroke="#fff" shape-rendering="crispEdges"/><path d="M8 13 Q7.5 10 10.5 9.8 Q12 7.2 15 8.2 Q17.5 6.8 19.5 8.8 Q23 8 24 11 Q27.5 12 26.5 15.5 Q27.5 19 24 19.8 Q23 22.8 19.5 21.8 Q17 23.5 14.8 21.5 Q11 22.5 10.2 19.2 Q6.5 18 8 13 Z" fill="url(#gCloud)" stroke="#555" stroke-width="0.7"/><path d="M26.8 6.8 L16 13.2 L20.2 14.4 L6.8 26.8 L25 17.6 L20.6 16 Z" fill="#f8d414" stroke="#8a7000" stroke-width="0.5"/></svg>
<div class="a" style="left:8px;top:92px;width:1171px;height:239px;border-top:1px solid #b2b2b2;border-right:1px solid #b9b9b9;border-bottom:1px solid #b9b9b9;border-left:1px solid #e3e6ea"></div>
<div class="a" style="left:10px;top:118px;width:1168px;height:212px;background:#fff"><div class="a" style="left:0;top:0;width:1168px;height:4px;background:#C9DFF5"></div><div class="a" style="left:0;top:0;width:2px;height:212px;background:#C9DFF5"></div><div class="a" style="left:1165px;top:0;width:3px;height:212px;background:#C9DFF5"></div><div class="a" style="left:0;top:209px;width:1168px;height:3px;background:#C9DFF5"></div><div class="a" style="left:1px;top:1px;width:1166px;height:1px;background:#f4f9fe"></div><div class="a" style="left:0;top:0;width:1168px;height:1px;background:#7f9fd3"></div><div class="a" style="left:0;top:0;width:1px;height:212px;background:#6f8fcb"></div><div class="a" style="left:1167px;top:0;width:1px;height:212px;background:#73879d"></div><div class="a" style="left:0;top:211px;width:1168px;height:1px;background:#73879d"></div><div class="a" style="left:2px;top:4px;width:1162px;height:204px;background:#fff;border:1px solid #b4b4b4;box-shadow:1px 1px 0 #fff"></div></div>
<div class="a" style="left:13px;top:118px;width:88px;height:2px;background:#C9DFF5"></div>
<svg class="a" style="left:10px;top:96px" width="981" height="23" viewBox="10 96 981 23" shape-rendering="crispEdges"><path d="M103 118 V102 L108 97 H183 V118 Z" fill="#FB9A4B"/><path d="M102.5 102.5 V118 M103.5 102.5 L108.5 97.5 H183" stroke="#fff" fill="none"/><path d="M102.5 101.5 L107.5 96.5 H183.5 V118" stroke="#72859a" fill="none"/><path d="M185 118 V102 L190 97 H259 V118 Z" fill="#FB9A4B"/><path d="M184.5 102.5 V118 M185.5 102.5 L190.5 97.5 H259" stroke="#fff" fill="none"/><path d="M184.5 101.5 L189.5 96.5 H259.5 V118" stroke="#72859a" fill="none"/><path d="M261 118 V102 L266 97 H316 V118 Z" fill="#FB9A4B"/><path d="M260.5 102.5 V118 M261.5 102.5 L266.5 97.5 H316" stroke="#fff" fill="none"/><path d="M260.5 101.5 L265.5 96.5 H316.5 V118" stroke="#72859a" fill="none"/><path d="M318 118 V102 L323 97 H376 V118 Z" fill="#FB9A4B"/><path d="M317.5 102.5 V118 M318.5 102.5 L323.5 97.5 H376" stroke="#fff" fill="none"/><path d="M317.5 101.5 L322.5 96.5 H376.5 V118" stroke="#72859a" fill="none"/><path d="M378 118 V102 L383 97 H462 V118 Z" fill="#FB9A4B"/><path d="M377.5 102.5 V118 M378.5 102.5 L383.5 97.5 H462" stroke="#fff" fill="none"/><path d="M377.5 101.5 L382.5 96.5 H462.5 V118" stroke="#72859a" fill="none"/><path d="M464 118 V102 L469 97 H538 V118 Z" fill="#FB9A4B"/><path d="M463.5 102.5 V118 M464.5 102.5 L469.5 97.5 H538" stroke="#fff" fill="none"/><path d="M463.5 101.5 L468.5 96.5 H538.5 V118" stroke="#72859a" fill="none"/><path d="M540 118 V102 L545 97 H602 V118 Z" fill="#FB9A4B"/><path d="M539.5 102.5 V118 M540.5 102.5 L545.5 97.5 H602" stroke="#fff" fill="none"/><path d="M539.5 101.5 L544.5 96.5 H602.5 V118" stroke="#72859a" fill="none"/><path d="M604 118 V102 L609 97 H677 V118 Z" fill="#FB9A4B"/><path d="M603.5 102.5 V118 M604.5 102.5 L609.5 97.5 H677" stroke="#fff" fill="none"/><path d="M603.5 101.5 L608.5 96.5 H677.5 V118" stroke="#72859a" fill="none"/><path d="M679 118 V102 L684 97 H743 V118 Z" fill="#FB9A4B"/><path d="M678.5 102.5 V118 M679.5 102.5 L684.5 97.5 H743" stroke="#fff" fill="none"/><path d="M678.5 101.5 L683.5 96.5 H743.5 V118" stroke="#72859a" fill="none"/><path d="M745 118 V102 L750 97 H796 V118 Z" fill="#FB9A4B"/><path d="M744.5 102.5 V118 M745.5 102.5 L750.5 97.5 H796" stroke="#fff" fill="none"/><path d="M744.5 101.5 L749.5 96.5 H796.5 V118" stroke="#72859a" fill="none"/><path d="M798 118 V102 L803 97 H875 V118 Z" fill="#FB9A4B"/><path d="M797.5 102.5 V118 M798.5 102.5 L803.5 97.5 H875" stroke="#fff" fill="none"/><path d="M797.5 101.5 L802.5 96.5 H875.5 V118" stroke="#72859a" fill="none"/><path d="M877 118 V102 L882 97 H937 V118 Z" fill="#FB9A4B"/><path d="M876.5 102.5 V118 M877.5 102.5 L882.5 97.5 H937" stroke="#fff" fill="none"/><path d="M876.5 101.5 L881.5 96.5 H937.5 V118" stroke="#72859a" fill="none"/><path d="M939 118 V102 L944 97 H988 V118 Z" fill="#FB9A4B"/><path d="M938.5 102.5 V118 M939.5 102.5 L944.5 97.5 H988" stroke="#fff" fill="none"/><path d="M938.5 101.5 L943.5 96.5 H988.5 V118" stroke="#72859a" fill="none"/><path d="M13 118 V103 L19 97 H101 V118 Z" fill="#C74D2D"/><path d="M13.5 118 V102.5 L18.5 97.5 H100.5" stroke="#fff" fill="none"/><path d="M12.5 118 V102.5 L18.5 96.5 H101.5 V118" stroke="#5f82c6" fill="none"/></svg><div class="t b" style="left:18px;top:101px;color:#fff;letter-spacing:-0.09px;">Information</div><div class="t" style="left:107.2px;top:101px;color:#000;letter-spacing:0.373px;">Customer</div><div class="t" style="left:189.2px;top:101px;color:#000;letter-spacing:0.206px;">Contacts</div><div class="t" style="left:265.2px;top:101px;color:#000;letter-spacing:-0.137px;">Event</div><div class="t" style="left:322.2px;top:101px;color:#000;letter-spacing:0.331px;">Dates</div><div class="t" style="left:382.2px;top:101px;color:#000;letter-spacing:0.329px;">Schedules</div><div class="t" style="left:468.2px;top:101px;color:#000;letter-spacing:0.287px;">Shipping</div><div class="t" style="left:544.2px;top:101px;color:#000;letter-spacing:0.164px;">Return</div><div class="t" style="left:608.2px;top:101px;color:#000;letter-spacing:0.092px;">Payment</div><div class="t" style="left:683.2px;top:101px;color:#000;letter-spacing:0.14px;">Default</div><div class="t" style="left:749.2px;top:101px;color:#000;letter-spacing:0.332px;">Cost</div><div class="t" style="left:802.2px;top:101px;color:#000;letter-spacing:0.243px;">Sub Total</div><div class="t" style="left:881.2px;top:101px;color:#000;letter-spacing:0.163px;">Status</div><div class="t" style="left:943.2px;top:101px;color:#000;letter-spacing:0.113px;">UDF</div>
<div class="t " style="left:17px;top:131px;letter-spacing:0.387px;">Number</div>
<div class="t " style="left:17px;top:159px;letter-spacing:0.271px;">Description</div>
<div class="t " style="left:17px;top:187px;letter-spacing:0.136px;">Date Created</div>
<div class="t " style="left:17px;top:215px;letter-spacing:0.08px;">Site</div>
<div class="t " style="left:17px;top:243px;letter-spacing:-0.002px;">Project Mgr.</div>
<div class="t " style="left:17px;top:271px;letter-spacing:0.302px;">Sales Person</div>
<div class="t " style="left:17px;top:299px;letter-spacing:0.201px;">Labor Planner</div>
<div class="f " style="left:99px;top:128px;width:100px;height:24px"><span style="letter-spacing:0.205px;">ORD-3614</span></div>
<div class="t " style="left:212px;top:131px;letter-spacing:0.282px;">Version</div>
<div class="f " style="left:264px;top:128px;width:88px;height:24px"><span style="letter-spacing:0.327px;">1</span><svg class="mg" style="left:68px;top:1px" viewBox="0 0 16 16"><use href="#mag"/></svg></div>
<div class="f fw" style="left:99px;top:156px;width:255px;height:24px"></div>
<div class="f " style="left:99px;top:184px;width:100px;height:24px"><span style="letter-spacing:0.194px;">07/12/2017</span></div>
<div class="t " style="left:212px;top:187px;letter-spacing:0.093px;">Project</div>
<div class="f fw" style="left:264px;top:184px;width:88px;height:24px"><span style="letter-spacing:0.205px;">ORD-3614</span><svg class="mg" style="left:68px;top:1px" viewBox="0 0 16 16"><use href="#mag"/></svg></div>
<div class="f " style="left:99px;top:212px;width:100px;height:24px"><span style="letter-spacing:0.292px;">Gearhouse</span></div>
<div class="t " style="left:212px;top:215px;letter-spacing:0.164px;">Sub Orders</div>
<div class="f " style="left:289px;top:212px;width:66px;height:24px"><span style="letter-spacing:0.327px;">0</span></div>
<div class="f fb" style="left:99px;top:240px;width:255px;border-color:#7f99ba;box-shadow:inset 1px 1px 0 #dfe9f4,inset -1px -1px 0 #e6eef7"><svg class="mg" style="left:218px;top:1px" viewBox="0 0 16 16"><use href="#mag"/></svg><div class="a" style="left:234px;top:0;width:19px;height:22px;background:linear-gradient(90deg,#d3e1f0 0,#f4f8fc 35%,#eef4fa 60%,#c9daec 100%);border-left:1px solid #7f97b6"></div><div class="a" style="left:235px;top:0;width:18px;height:22px;background:linear-gradient(rgba(255,255,255,0.5) 0,rgba(255,255,255,0.0) 45%,rgba(190,210,232,0.55) 100%)"></div><svg class="a" style="left:239px;top:9px" width="10" height="5" viewBox="0 0 10 5"><path d="M0 0 H10 L5 5 Z" fill="#2e2e2e"/></svg></div>
<div class="f fb" style="left:99px;top:268px;width:255px;border-color:#7f99ba;box-shadow:inset 1px 1px 0 #dfe9f4,inset -1px -1px 0 #e6eef7"><span style="left:2px;top:4px;letter-spacing:-0.157px;">Mantra M Mantra</span><svg class="mg" style="left:218px;top:1px" viewBox="0 0 16 16"><use href="#mag"/></svg><div class="a" style="left:234px;top:0;width:19px;height:22px;background:linear-gradient(90deg,#d3e1f0 0,#f4f8fc 35%,#eef4fa 60%,#c9daec 100%);border-left:1px solid #7f97b6"></div><div class="a" style="left:235px;top:0;width:18px;height:22px;background:linear-gradient(rgba(255,255,255,0.5) 0,rgba(255,255,255,0.0) 45%,rgba(190,210,232,0.55) 100%)"></div><svg class="a" style="left:239px;top:9px" width="10" height="5" viewBox="0 0 10 5"><path d="M0 0 H10 L5 5 Z" fill="#2e2e2e"/></svg></div>
<div class="f fw" style="left:99px;top:296px;width:255px;height:24px"><svg class="mg" style="left:235px;top:1px" viewBox="0 0 16 16"><use href="#mag"/></svg></div>
<div class="a" style="left:366px;top:131px;width:215px;height:98px;border:1px solid #a8a8a8;box-shadow:inset 1px 1px 0 #fff"></div>
<div class="a" style="left:371px;top:126px;width:96px;height:14px;background:#fff"></div>
<div class="t b" style="left:373px;top:126px;letter-spacing:-0.134px;">Charge Duration</div>
<div class="t " style="left:369px;top:144px;letter-spacing:0.095px;">Start Date/Time</div>
<div class="t " style="left:369px;top:173px;letter-spacing:0.186px;">End Date/Time</div>
<div class="t " style="left:369px;top:202px;letter-spacing:0.205px;">Duration</div>
<div class="f " style="left:458px;top:141px;width:120px;height:24px"><span style="letter-spacing:0.048px;">08/12/2017 06:00 AM</span></div>
<div class="f " style="left:458px;top:170px;width:120px;height:24px"><span style="letter-spacing:0.048px;">09/12/2017 06:00 AM</span></div>
<div class="f " style="left:458px;top:199px;width:85px;height:24px"><span style="letter-spacing:0.327px;">1d</span></div>
<div class="t " style="left:588px;top:146px;letter-spacing:0.086px;">Conv. Date</div>
<div class="f " style="left:655px;top:141px;width:89px;height:24px"></div>
<div class="cb" style="left:589px;top:175px"></div><svg class="a" style="left:591px;top:177px" width="9" height="9" viewBox="0 0 9 9"><path d="M0.5 3.3 H2.9 L3.5 5.3 L7.7 0.3 L8.6 1 L3.6 8.2 H2.3 Z" fill="#111"/></svg>
<div class="t " style="left:606px;top:175px;letter-spacing:0.288px;">Show Suggestions</div>
<div class="cb" style="left:589px;top:199px"></div>
<div class="t " style="left:606px;top:199px;letter-spacing:0.023px;">Event Pricing</div>
<div class="t " style="left:362px;top:242px;letter-spacing:0.373px;">Customer</div>
<div class="f " style="left:421px;top:236px;width:160px;height:24px"><span style="letter-spacing:0.157px;">Cross Country Finance</span><svg class="mg" style="left:140px;top:1px" viewBox="0 0 16 16"><use href="#mag"/></svg></div>
<div class="t " style="left:362px;top:270px;letter-spacing:0.092px;">Contact</div>
<div class="f " style="left:421px;top:265px;width:160px;height:24px"><span style="letter-spacing:0.059px;">Accounts Payable</span><svg class="mg" style="left:140px;top:1px" viewBox="0 0 16 16"><use href="#mag"/></svg></div>
<div class="t " style="left:362px;top:299px;letter-spacing:0.168px;">Contact Tel #</div>
<div class="f " style="left:451px;top:294px;width:129px;height:24px"></div>
<div class="t " style="left:587px;top:241px;letter-spacing:0.315px;">Bill To</div>
<div class="f " style="left:654px;top:236px;width:160px;height:24px"><span style="letter-spacing:0.157px;">Cross Country Finance</span><svg class="mg" style="left:140px;top:1px" viewBox="0 0 16 16"><use href="#mag"/></svg></div>
<div class="t " style="left:587px;top:270px;letter-spacing:0.109px;">Bill Contact</div>
<div class="f " style="left:654px;top:265px;width:160px;height:24px"><span style="letter-spacing:0.059px;">Accounts Payable</span><svg class="mg" style="left:140px;top:1px" viewBox="0 0 16 16"><use href="#mag"/></svg></div>
<div class="t " style="left:587px;top:299px;letter-spacing:0.327px;">Language</div>
<div class="f " style="left:654px;top:294px;width:90px;height:24px"><svg class="mg" style="left:70px;top:1px" viewBox="0 0 16 16"><use href="#mag"/></svg></div>
<div class="a" style="left:752px;top:148px;width:290px;height:83px;background:#fff"><div class="a" style="left:0;top:0;width:290px;height:4px;background:#C9DFF5"></div><div class="a" style="left:0;top:0;width:2px;height:83px;background:#C9DFF5"></div><div class="a" style="left:287px;top:0;width:3px;height:83px;background:#C9DFF5"></div><div class="a" style="left:0;top:80px;width:290px;height:3px;background:#C9DFF5"></div><div class="a" style="left:1px;top:1px;width:288px;height:1px;background:#f4f9fe"></div><div class="a" style="left:0;top:0;width:290px;height:1px;background:#7f9fd3"></div><div class="a" style="left:0;top:0;width:1px;height:83px;background:#6f8fcb"></div><div class="a" style="left:289px;top:0;width:1px;height:83px;background:#73879d"></div><div class="a" style="left:0;top:82px;width:290px;height:1px;background:#73879d"></div><div class="a" style="left:2px;top:4px;width:284px;height:75px;background:#fff;border:1px solid #b4b4b4;box-shadow:1px 1px 0 #fff"></div></div>
<div class="a" style="left:755px;top:148px;width:88px;height:2px;background:#C9DFF5"></div>
<svg class="a" style="left:752px;top:126px" width="214" height="23" viewBox="752 126 214 23" shape-rendering="crispEdges"><path d="M845 148 V132 L850 127 H963 V148 Z" fill="#FB9A4B"/><path d="M844.5 132.5 V148 M845.5 132.5 L850.5 127.5 H963" stroke="#fff" fill="none"/><path d="M844.5 131.5 L849.5 126.5 H963.5 V148" stroke="#72859a" fill="none"/><path d="M755 148 V133 L761 127 H843 V148 Z" fill="#C74D2D"/><path d="M755.5 148 V132.5 L760.5 127.5 H842.5" stroke="#fff" fill="none"/><path d="M754.5 148 V132.5 L760.5 126.5 H843.5 V148" stroke="#5f82c6" fill="none"/></svg><div class="t b" style="left:760px;top:131px;color:#fff;letter-spacing:-0.001px;">Comments</div><div class="t" style="left:849.2px;top:131px;color:#000;letter-spacing:0.407px;">LaborComments</div>
<div class="a" style="left:761px;top:154px;width:269px;height:69px;background:#EEEEEE;border:1px solid #6d8092;box-shadow:inset 0 0 0 1px #7c7c7c"></div>
<svg class="mg" style="left:1011px;top:157px" viewBox="0 0 16 16"><use href="#mag"/></svg>
<div class="t " style="left:826px;top:248px;letter-spacing:0.164px;">Document Folder:</div>
<div class="a" style="left:826px;top:264px;width:216px;height:49px;background:#EEEEEE;border:1px solid #6d8092;box-shadow:inset 0 0 0 1px #7c7c7c"></div>
<div class="a" style="left:1014px;top:240px;width:49px;height:23px;border:1px solid #b6b6b6;background:#fff"></div>
<div class="a" style="left:1024px;top:242px;width:30px;height:20px;border:1px solid #7a7272;border-radius:1.5px;background:#fff"></div>
<div class="t" style="left:1025.4px;top:245px;font-size:11px;color:#000;letter-spacing:-0.5px;-webkit-font-smoothing:antialiased">Reset</div>
<div class="a" style="left:8px;top:356px;width:1172px;height:315px;background:#fff"><div class="a" style="left:0;top:0;width:1172px;height:4px;background:#C9DFF5"></div><div class="a" style="left:0;top:0;width:2px;height:315px;background:#C9DFF5"></div><div class="a" style="left:1169px;top:0;width:3px;height:315px;background:#C9DFF5"></div><div class="a" style="left:0;top:312px;width:1172px;height:3px;background:#C9DFF5"></div><div class="a" style="left:1px;top:1px;width:1170px;height:1px;background:#f4f9fe"></div><div class="a" style="left:0;top:0;width:1172px;height:1px;background:#7f9fd3"></div><div class="a" style="left:0;top:0;width:1px;height:315px;background:#6f8fcb"></div><div class="a" style="left:1171px;top:0;width:1px;height:315px;background:#73879d"></div><div class="a" style="left:0;top:314px;width:1172px;height:1px;background:#73879d"></div><div class="a" style="left:2px;top:4px;width:1166px;height:307px;background:#fff;border:1px solid #b4b4b4;box-shadow:1px 1px 0 #fff"></div></div>
<div class="a" style="left:11px;top:356px;width:65px;height:2px;background:#C9DFF5"></div>
<svg class="a" style="left:8px;top:334px" width="129" height="23" viewBox="8 334 129 23" shape-rendering="crispEdges"><path d="M78 356 V340 L83 335 H134 V356 Z" fill="#FB9A4B"/><path d="M77.5 340.5 V356 M78.5 340.5 L83.5 335.5 H134" stroke="#fff" fill="none"/><path d="M77.5 339.5 L82.5 334.5 H134.5 V356" stroke="#72859a" fill="none"/><path d="M11 356 V341 L17 335 H76 V356 Z" fill="#C74D2D"/><path d="M11.5 356 V340.5 L16.5 335.5 H75.5" stroke="#fff" fill="none"/><path d="M10.5 356 V340.5 L16.5 334.5 H76.5 V356" stroke="#5f82c6" fill="none"/></svg><div class="t b" style="left:16px;top:339px;color:#fff;letter-spacing:0.094px;">Item(s)</div><div class="t" style="left:82.2px;top:339px;color:#000;letter-spacing:0.262px;">Labor</div>
<div class="a" style="left:12px;top:362px;width:1162px;height:303px;border:1px solid #6d7f91;background:#fff"></div>
<div class="a" style="left:13px;top:363px;width:1160px;height:284px;overflow:hidden;background:#fff"><div class="a" style="left:0;top:0;width:1300px;height:20px;background:#FF6E3C"></div><div class="hc" style="left:0px;width:14px;letter-spacing:-0.33px;">T</div><div class="rc" style="left:0px;width:15px;text-align:left;padding-left:1px;letter-spacing:0px;"></div><div class="hc" style="left:15px;width:14px;letter-spacing:-0.005px;">S</div><div class="rc" style="left:15px;width:15px;text-align:left;padding-left:1px;letter-spacing:0px;"></div><div class="hc" style="left:30px;width:74px;letter-spacing:0.163px;">Status</div><div class="rc" style="left:30px;width:75px;text-align:left;padding-left:1px;letter-spacing:0px;"></div><div class="hc" style="left:105px;width:14px;letter-spacing:0.334px;">C</div><div class="rc" style="left:105px;width:15px;text-align:left;padding-left:1px;letter-spacing:0px;"></div><div class="hc" style="left:120px;width:19px;letter-spacing:0.327px;">L</div><div class="rc" style="left:120px;width:20px;text-align:left;padding-left:1px;letter-spacing:0px;"></div><div class="hc" style="left:140px;width:44px;letter-spacing:-0.059px;">Action</div><div class="rc" style="left:140px;width:45px;text-align:left;padding-left:1px;letter-spacing:0.001px;">Misc.</div><div class="hc" style="left:185px;width:99px;letter-spacing:0.031px;">Product ID</div><div class="rc" style="left:185px;width:100px;"><div class="a" style="left:0;top:0;width:99px;height:18px;border:1px solid #f01000;padding-left:0px;line-height:18px;letter-spacing:0.036px;">INSURANCE</div></div><div class="hc" style="left:285px;width:259px;letter-spacing:0.271px;">Description</div><div class="rc" style="left:285px;width:260px;text-align:left;padding-left:8px;letter-spacing:0.263px;">Insurance*</div><div class="hc" style="left:545px;width:54px;letter-spacing:0.205px;">Duration</div><div class="rc" style="left:545px;width:55px;text-align:left;padding-left:1px;letter-spacing:0.327px;">1d</div><div class="hc" style="left:600px;width:29px;letter-spacing:-0.109px;">DIW</div><div class="rc" style="left:600px;width:30px;text-align:left;padding-left:1px;letter-spacing:0px;"></div><div class="hc" style="left:630px;width:49px;letter-spacing:-0.332px;">DIM</div><div class="rc" style="left:630px;width:50px;text-align:left;padding-left:1px;letter-spacing:0px;"></div><div class="hc" style="left:680px;width:74px;letter-spacing:0.265px;">Total Cost</div><div class="rc" style="left:680px;width:75px;text-align:right;padding-right:1px;letter-spacing:0.161px;">0.00</div><div class="hc" style="left:755px;width:29px;letter-spacing:-0.556px;">Qty</div><div class="rc" style="left:755px;width:30px;text-align:right;padding-right:1px;letter-spacing:0.327px;">1</div><div class="hc" style="left:785px;width:59px;letter-spacing:0.099px;">Unit Price</div><div class="rc" style="left:785px;width:60px;text-align:right;padding-right:1px;letter-spacing:0.161px;">0.00</div><div class="hc" style="left:845px;width:54px;letter-spacing:0.289px;">Discount</div><div class="rc" style="left:845px;width:55px;text-align:right;padding-right:1px;letter-spacing:0.161px;">0.00</div><div class="hc" style="left:900px;width:59px;letter-spacing:0.208px;">Net Disc</div><div class="rc" style="left:900px;width:60px;text-align:right;padding-right:1px;letter-spacing:0.161px;">0.00</div><div class="hc" style="left:960px;width:59px;letter-spacing:0.08px;">Net Each</div><div class="rc" style="left:960px;width:60px;text-align:right;padding-right:1px;letter-spacing:0.161px;">0.00</div><div class="hc" style="left:1020px;width:74px;letter-spacing:0.107px;">Amount</div><div class="rc" style="left:1020px;width:75px;text-align:right;padding-right:1px;letter-spacing:0.161px;">0.00</div><div class="hc" style="left:1095px;width:39px;letter-spacing:0.165px;">Unit</div><div class="rc" style="left:1095px;width:40px;text-align:left;padding-left:1px;letter-spacing:-0.113px;">Day</div><div class="hc" style="left:1135px;width:59px;letter-spacing:0px;"></div><div class="rc" style="left:1135px;width:60px;text-align:left;padding-left:4px;letter-spacing:0.194px;">08/12/2017</div><div class="cb cbt" style="left:1px;top:23px"></div><div class="cb cbt" style="left:16px;top:23px"></div><div class="cb cbt" style="left:106px;top:23px"></div><div class="cb cbt" style="left:123px;top:23px"></div><svg class="a" style="left:3px;top:25px" width="9" height="9" viewBox="0 0 9 9"><path d="M0.5 3.3 H2.9 L3.5 5.3 L7.7 0.3 L8.6 1 L3.6 8.2 H2.3 Z" fill="#111"/></svg></div>
<div class="a" style="left:13px;top:647px;width:1159px;height:16px;background:#EEEEEE;border-top:1px solid #6d8199;border-bottom:1px solid #6d8199"></div>
<div class="a" style="left:13px;top:648px;width:1159px;height:1px;background:#dbe6f2"></div>
<div class="a" style="left:13px;top:647px;width:15px;height:16px;background:#EEEEEE;border:1px solid #6d8199;border-right:none"></div>
<svg class="a" style="left:18px;top:651px" width="5" height="9" viewBox="0 0 5 9"><path d="M5 0 V9 L0 4.5 Z" fill="#222"/></svg>
<div class="a" style="left:1156px;top:647px;width:16px;height:16px;background:#EEEEEE;border:1px solid #6d8199"></div>
<svg class="a" style="left:1162px;top:651px" width="5" height="9" viewBox="0 0 5 9"><path d="M0 0 V9 L5 4.5 Z" fill="#222"/></svg>
<div class="a" style="left:28px;top:647px;width:425px;height:16px;border:1px solid #FFB700;background:linear-gradient(#e8924f 0,#e8924f 1px,#f1c3a2 1px,#eaa677 55%,#e8a06c);box-shadow:inset 1px 0 0 #eaa06a"></div>
<div class="a" style="left:238px;top:651px;width:6px;height:9px;background:repeating-linear-gradient(90deg,#7d7590 0 1px,#f6d9c4 1px 2px)"></div>
<div class="a" style="left:13px;top:663px;width:1160px;height:1px;background:#9fb5d4"></div>
<div class="t b" style="left:70px;top:678px;font-size:14px;line-height:16px;height:16px;color:#1a1a1a;letter-spacing:0.2px">Items</div>
<div class="f " style="left:120px;top:673px;width:100px;height:24px"></div>
<div class="t b" style="left:235px;top:678px;font-size:14px;line-height:16px;height:16px;color:#1a1a1a;letter-spacing:0.2px">Labor</div>
<div class="f " style="left:287px;top:673px;width:100px;height:24px"></div>
<div class="t b" style="left:446px;top:678px;font-size:14px;line-height:16px;height:16px;color:#1a1a1a;letter-spacing:0.2px">Sub Total</div>
<div class="f " style="left:525px;top:673px;width:100px;height:24px"></div>
<div class="t b" style="left:637px;top:678px;font-size:14px;line-height:16px;height:16px;color:#1a1a1a;letter-spacing:0.2px">Tax</div>
<div class="f " style="left:670px;top:673px;width:100px;height:24px"></div>
<div class="a" style="left:813px;top:673px;width:89px;height:23px;border:1px solid #bcbcbc;background:#fff"></div>
<div class="t b" style="left:842px;top:678px;font-size:14px;line-height:16px;height:16px;color:#1a1a1a;letter-spacing:0.2px">Total</div>
<div class="f " style="left:906px;top:673px;width:100px;height:24px"></div>
<div class="t b" style="left:906.5px;top:677px;font-size:14px;line-height:16px;height:16px;color:#1a1a1a;letter-spacing:0.2px">0.00</div>
<div class="a" style="left:8px;top:707px;width:1172px;height:1px;background:#b4b4b4"></div>
<div class="a" style="left:8px;top:707px;width:1px;height:25px;background:#b9c0c4"></div>
<div class="a" style="left:9px;top:708px;width:1170px;height:23px;border-top:1px solid #707070;border-left:1px solid #7c7c7c;border-bottom:1px solid #bdbdbd;border-right:1px solid #bdbdbd;background:#fff"></div>
</body></html>
